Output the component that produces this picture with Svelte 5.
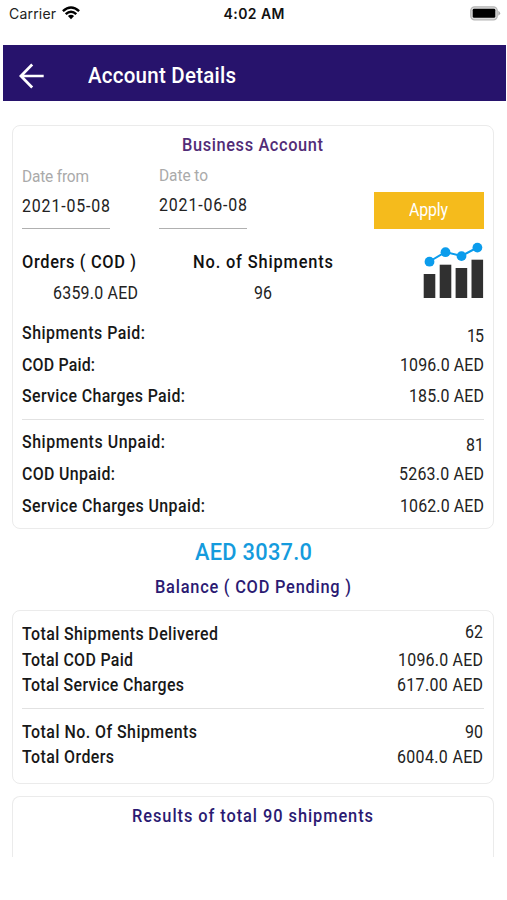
<script>
  const SQUEEZE = 0.91;

  // Narrows the letters and tracks them out so the line spans the given width.
  function fit(node, size) {
    const [width, scale] = Array.isArray(size) ? size : [size, SQUEEZE];
    const range = document.createRange();
    range.selectNodeContents(node);
    const natural = range.getBoundingClientRect().width;
    const count = node.textContent.length;
    const full = width / scale;
    const spacing = (full - natural) / (count - 1);
    node.style.letterSpacing = `${spacing}px`;
    node.style.marginRight = `${width - full - spacing}px`;
    if (scale !== 1) node.style.transform = `scaleX(${scale})`;
  }

  const paid = [
    ['Shipments Paid:', 123, '15', 17, 3],
    ['COD Paid:', 73, '1096.0 AED', 84, 0],
    ['Service Charges Paid:', 163, '185.0 AED', 75, 0],
  ];
  const unpaid = [
    ['Shipments Unpaid:', 143, '81', 18, 3],
    ['COD Unpaid:', 93, '5263.0 AED', 85, 0],
    ['Service Charges Unpaid:', 183, '1062.0 AED', 84, 0],
  ];
  const totals = [
    ['Total Shipments Delivered', 196, '62', 18, -1.5],
    ['Total COD Paid', 111, '1096.0 AED', 85, 0],
    ['Total Service Charges', 162, '617.00 AED', 86, 0],
  ];
  const orders = [
    ['Total No. Of Shipments', 175, '90', 18, 0],
    ['Total Orders', 92, '6004.0 AED', 86, 0],
  ];
</script>

{#snippet rows(list)}
  {#each list as [label, lw, value, vw, shift]}
    <div class="row">
      <span class="label" use:fit={lw}>{label}</span>
      <div class="value" style:top="{shift}px"><span use:fit={vw}>{value}</span></div>
    </div>
  {/each}
{/snippet}

<main>
  <div class="status">
    <div class="carrier">
      <span use:fit={[47, 1]}>Carrier</span>
      <svg width="18" height="14" viewBox="0 0 18 14">
        <g fill="none" stroke="#000" stroke-width="2.5">
          <path d="M.9 5.1Q9-2 17.1 5.1" />
          <path d="M3.7 8.1Q9 3.3 14.3 8.1" />
        </g>
        <path d="M5.9 10.1Q9 7.6 12.1 10.1L9 13.3Z" />
      </svg>
    </div>
    <b use:fit={[61, 1]}>4:02 AM</b>
    <div class="power">
      <svg width="31" height="15" viewBox="0 0 31 15">
        <rect x=".8" y=".8" width="26.4" height="13" rx="3.8" fill="#ddd" stroke="#b5b5b5" stroke-width="1.3" />
        <rect x="2.7" y="2.8" width="22.6" height="9" rx="1.4" />
        <path d="M28.3 4.8Q32 7.3 28.3 9.8Z" fill="#aaa" />
      </svg>
    </div>
  </div>

  <header>
    <svg width="26" height="26" viewBox="0 0 26 26" fill="none" stroke="#fff" stroke-width="2.7">
      <path d="M24.7 13H2M13.2 1.5L1.9 13L13.2 24.5" />
    </svg>
    <h1 use:fit={148}>Account Details</h1>
  </header>

  <section class="account">
    <h2><span use:fit={141}>Business Account</span></h2>
    <div class="filter">
      <div class="field">
        <small><span use:fit={67}>Date from</span></small>
        <div class="date"><span use:fit={88}>2021-05-08</span></div>
      </div>
      <div class="field to">
        <small><span use:fit={49}>Date to</span></small>
        <div class="date"><span use:fit={88}>2021-06-08</span></div>
      </div>
      <button><span use:fit={39}>Apply</span></button>
    </div>
    <div class="summary">
      <div class="orders">
        <b><span use:fit={114}>Orders ( COD )</span></b>
        <p><span use:fit={85}>6359.0 AED</span></p>
      </div>
      <div class="shipments">
        <b><span use:fit={140}>No. of Shipments</span></b>
        <p><span use:fit={18}>96</span></p>
      </div>
      <svg width="61" height="57" viewBox="0 0 61 57">
        <g fill="#303030">
          <rect x=".7" y="32" width="11.6" height="24" />
          <rect x="16.7" y="22.7" width="11.6" height="33.3" />
          <rect x="32.6" y="26" width="11.6" height="30" />
          <rect x="48.5" y="17.7" width="11.6" height="38.3" />
        </g>
        <path d="M6.5 19.5L22.5 10L38.5 14L54.4 5.5" fill="none" stroke="#0b9cec" stroke-width="2" />
        <g fill="#0b9cec">
          <circle cx="6.5" cy="19.7" r="4.9" />
          <circle cx="22.5" cy="10.2" r="4.9" />
          <circle cx="38.5" cy="14.1" r="4.9" />
          <circle cx="54.4" cy="5.6" r="4.9" />
        </g>
      </svg>
    </div>
    <div class="group">{@render rows(paid)}</div>
    <hr />
    <div class="group second">{@render rows(unpaid)}</div>
  </section>

  <div class="balance">
    <strong><span use:fit={117}>AED 3037.0</span></strong>
    <h2><span use:fit={196}>Balance ( COD Pending )</span></h2>
  </div>

  <section class="totals">
    <div class="group">{@render rows(totals)}</div>
    <hr />
    <div class="group second">{@render rows(orders)}</div>
  </section>

  <section class="results">
    <h2><span use:fit={241}>Results of total 90 shipments</span></h2>
  </section>
</main>

<style>
  :global(body) { margin: 0; background: #fff; }
  main {
    box-sizing: border-box; width: 507px; height: 900px; overflow: hidden;
    font: 17.5px/20px Roboto, "Noto Sans", sans-serif; color: #222;
  }
  span, h1 { display: inline-block; white-space: nowrap; transform-origin: 0 50%; }
  b { white-space: nowrap; }
  h1, h2, p { margin: 0; }
  svg { display: block; flex: none; }
  .status {
    display: grid; grid-template-columns: 1fr auto 1fr; align-items: center;
    height: 28px; padding: 0 8px 0 9px; font-family: Inter, sans-serif; font-size: 14px;
  }
  .status b { font-weight: 600; color: #111; }
  .carrier { display: flex; align-items: center; gap: 6px; }
  .carrier svg { margin-top: -2px; }
  .power { display: flex; justify-content: flex-end; margin: -2px -2px 0 0; }
  header {
    box-sizing: border-box; display: flex; align-items: center; height: 56px; margin: 17px 1px 0 3px;
    padding-left: 16px; background: #27136c; color: #fff;
  }
  header svg { margin-top: 5px; }
  h1 { margin-left: 43px; margin-top: 3px; font-size: 22.5px; line-height: 28px; font-weight: 500; }
  section { box-sizing: border-box; margin: 0 13px 0 12px; padding: 0 9px; border: 1.5px solid #ebebeb; border-radius: 8px; }
  h2 { display: flex; justify-content: center; font-size: 18px; line-height: 20px; font-weight: 500; color: #2b1a72; }
  .account { height: 404px; margin-top: 24px; }
  .account h2 { padding-top: 9px; color: #522c77; }
  .filter { display: flex; height: 74px; padding-top: 10px; box-sizing: border-box; }
  .field { width: 88px; padding-top: 1px; }
  .to { margin: -1px 0 0 49px; }
  .field small { display: block; font-size: 17px; line-height: 20px; height: 20px; color: #aaa; }
  .date { height: 32px; padding-top: 10px; border-bottom: 1px solid #b0b0b0; }
  .to .date { height: 33px; }
  button {
    width: 110px; height: 37px; margin: 27px 0 0 auto; padding: 0; border: 0;
    background: #f5bb1c; color: #fff; font: inherit; line-height: 35px;
  }
  .summary { display: flex; height: 88px; padding-top: 14px; box-sizing: border-box; }
  .summary b { display: block; font-weight: 500; font-size: 18px; line-height: 20px; height: 31px; color: #111; padding-top: 10px; box-sizing: border-box; }
  .orders { width: 116px; }
  .orders b, .shipments b { margin-top: -1px; }
  .orders p { display: flex; justify-content: flex-end; margin-top: 10px; }
  .shipments { width: 140px; margin-left: 55px; }
  .shipments p { display: flex; justify-content: center; margin-top: 10px; }
  .summary svg { margin: -1px 0 0 auto; }
  .row { display: flex; justify-content: space-between; align-items: center; height: 31.7px; }
  .label { font-weight: 500; color: #181818; }
  .value { position: relative; display: flex; }
  hr { height: 1px; margin: 0; border: 0; background: #e2e2e2; }
  .account hr { margin: 7px 0 6.5px; }
  .balance { display: flex; flex-direction: column; align-items: center; height: 81px; padding-top: 8px; box-sizing: border-box; }
  .balance strong { font-size: 24px; line-height: 30px; font-weight: 500; color: #149bdd; }
  .balance h2 { margin-top: 10px; }
  .totals { height: 174px; padding-top: 10px; }
  .totals .row { height: 25.7px; }
  .totals .value { margin-right: 1px; }
  .totals hr { margin: 10px 0 9.6px; }
  .results { height: 61px; margin-top: 12px; padding-top: 9px; border-bottom: 0; border-radius: 8px 8px 0 0; }
</style>
